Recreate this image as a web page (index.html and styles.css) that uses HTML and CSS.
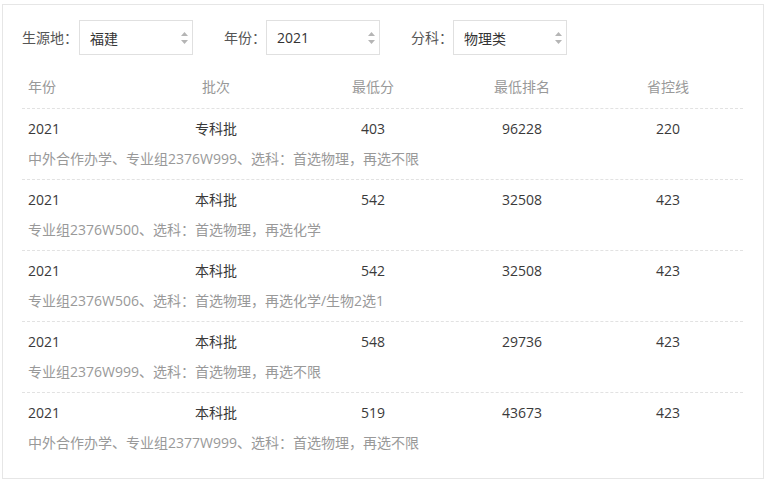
FILE: index.html
```html
<!DOCTYPE html>
<html lang="zh-CN">
<head>
<meta charset="utf-8">
<title>历年分数</title>
<link rel="stylesheet" href="styles.css">
</head>
<body>
<div class="panel">
  <div class="filters">
    <label class="flabel l1">生源地：</label>
    <div class="select"><span>福建</span>
      <svg class="spin" width="9" height="14" viewBox="0 0 9 14"><path d="M4.5 1 L8 5 L1 5 Z" fill="#b5b5b5"/><path d="M4.5 13 L8 9 L1 9 Z" fill="#b5b5b5"/></svg>
    </div>
    <label class="flabel l2">年份：</label>
    <div class="select"><span>2021</span>
      <svg class="spin" width="9" height="14" viewBox="0 0 9 14"><path d="M4.5 1 L8 5 L1 5 Z" fill="#b5b5b5"/><path d="M4.5 13 L8 9 L1 9 Z" fill="#b5b5b5"/></svg>
    </div>
    <label class="flabel l3">分科：</label>
    <div class="select"><span>物理类</span>
      <svg class="spin" width="9" height="14" viewBox="0 0 9 14"><path d="M4.5 1 L8 5 L1 5 Z" fill="#b5b5b5"/><path d="M4.5 13 L8 9 L1 9 Z" fill="#b5b5b5"/></svg>
    </div>
  </div>
  <div class="table">
    <div class="thead cols">
      <div class="c1">年份</div><div>批次</div><div>最低分</div><div>最低排名</div><div>省控线</div>
    </div>
    <div class="row">
      <div class="cols vals"><div class="c1">2021</div><div>专科批</div><div>403</div><div>96228</div><div>220</div></div>
      <div class="desc">中外合作办学、专业组2376W999、选科：首选物理，再选不限</div>
    </div>
    <div class="row">
      <div class="cols vals"><div class="c1">2021</div><div>本科批</div><div>542</div><div>32508</div><div>423</div></div>
      <div class="desc">专业组2376W500、选科：首选物理，再选化学</div>
    </div>
    <div class="row">
      <div class="cols vals"><div class="c1">2021</div><div>本科批</div><div>542</div><div>32508</div><div>423</div></div>
      <div class="desc">专业组2376W506、选科：首选物理，再选化学/生物2选1</div>
    </div>
    <div class="row">
      <div class="cols vals"><div class="c1">2021</div><div>本科批</div><div>548</div><div>29736</div><div>423</div></div>
      <div class="desc">专业组2376W999、选科：首选物理，再选不限</div>
    </div>
    <div class="row">
      <div class="cols vals"><div class="c1">2021</div><div>本科批</div><div>519</div><div>43673</div><div>423</div></div>
      <div class="desc">中外合作办学、专业组2377W999、选科：首选物理，再选不限</div>
    </div>
  </div>
</div>
</body>
</html>
```
FILE: styles.css
```css
* { box-sizing: border-box; }
body {
  margin: 4px 0 0 2px;
  font-family: "Open Sans", "Noto Sans CJK SC", sans-serif;
  font-size: 14px;
  color: #333;
  background: #fff;
}
.panel {
  width: 762px;
  border: 1px solid #e6e6e6;
  padding: 15px 0 15px 19px;
}
.filters {
  display: flex;
  align-items: center;
  height: 35px;
}
.flabel {
  color: #555;
  line-height: 20px;
  margin-right: 0;
}
.l1 { margin-right: 1px; }
.l2 { margin-left: 31px; }
.l3 { margin-left: 31px; }
.select {
  position: relative;
  width: 114px;
  height: 35px;
  border: 1px solid #e0e0e0;
  display: flex;
  align-items: center;
  padding-left: 10px;
  color: #333;
}
.spin {
  position: absolute;
  right: 3px;
  top: 10px;
}
.table {
  width: 721px;
  margin-top: 11px;
}
.cols {
  display: grid;
  grid-template-columns: 115px 158px 156px 142px 150px;
}
.cols > div { text-align: center; }
.cols > .c1 { text-align: left; padding-left: 6px; }
.thead {
  height: 42px;
  align-items: center;
  color: #999;
  line-height: 20px;
}
.row {
  border-top: 1px dashed #e2e2e2;
  height: 71px;
  padding: 10px 0 0 0;
}
.vals { line-height: 20px; color: #3a3a3a; }
.desc {
  margin-top: 10px;
  line-height: 20px;
  color: #999;
  padding-left: 6px;
}
```
